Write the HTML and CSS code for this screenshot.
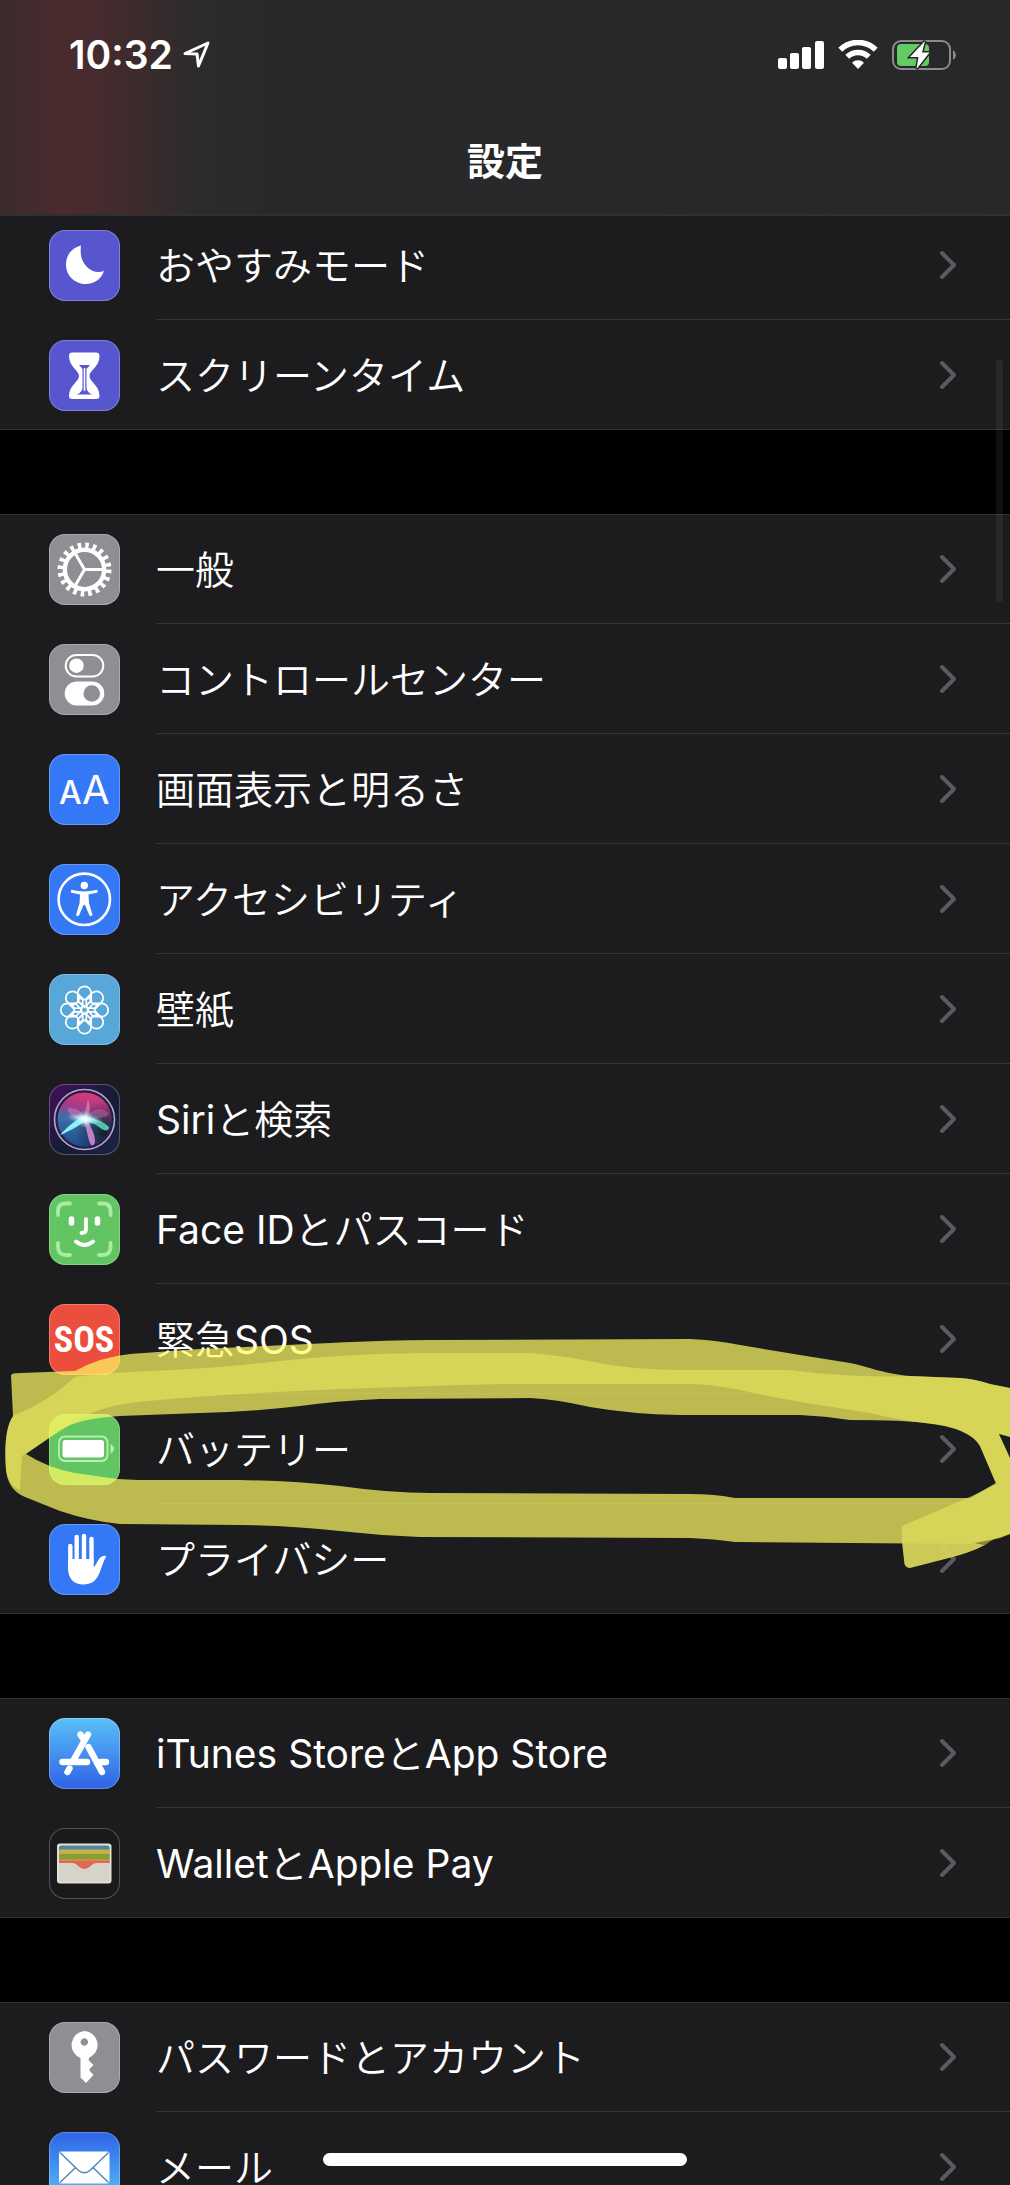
FILE: index.html
```html
<!DOCTYPE html>
<html lang="ja">
<head>
    <meta charset="UTF-8">
    <meta name="viewport" content="width=device-width, initial-scale=1.0">
    <title>設定</title>
    <link rel="stylesheet" href="styles.css">
</head>
<body>
<div class="screen">
    <header class="header">
        <div class="status-bar">
            <div class="status-left">
                <span class="time">10:32</span>
                <svg class="location" width="28" height="28" viewBox="0 0 28 28">
                    <path d="M2 12.500 L25 2 L15.500 25 L14 13 Z" fill="none" stroke="#fff" stroke-width="3" stroke-linejoin="round"/>
                </svg>
            </div>
            <div class="status-right">
                <svg width="46" height="30" viewBox="0 0 46 30" fill="#fff">
                    <rect x="0" y="18" width="9" height="11" rx="2"/>
                    <rect x="12" y="13" width="9" height="16" rx="2"/>
                    <rect x="24" y="7" width="9" height="22" rx="2"/>
                    <rect x="37" y="1" width="9" height="28" rx="2"/>
                </svg>
                <svg width="40" height="30" viewBox="0 0 40 30" fill="none" stroke="#fff" stroke-width="5.500">
                    <path d="M2.300 9.800 A25 25 0 0 1 37.700 9.800"/>
                    <path d="M9.200 16.800 A15.500 15.500 0 0 1 30.800 16.800"/>
                    <path d="M20 29 L14 22.800 A8.500 8.500 0 0 1 26 22.800 Z" fill="#fff" stroke="none"/>
                </svg>
                <svg width="65" height="30" viewBox="0 0 65 30">
                    <rect x="1" y="1" width="57" height="28" rx="8" fill="none" stroke="#8b8b8d" stroke-width="2"/>
                    <path d="M61 10 Q64 12 64 15 Q64 18 61 20 Z" fill="#8b8b8d"/>
                    <rect x="5" y="4" width="32" height="22" rx="4" fill="#63cb63"/>
                    <path d="M33 1 L18 17 H26.500 L24.500 29 L37.500 12.500 H30 Z" fill="#fff" stroke="#28282a" stroke-width="3" paint-order="stroke"/>
                </svg>
            </div>
        </div>
        <h1>設定</h1>
    </header>

    <main class="list">
        <section class="group">
            <a class="row" href="#dnd">
                <svg class="icon purple" viewBox="0 0 71 71">
                    <path d="M32 15.500 C22 18 17 26 17 34.500 C17 46 26 54 37 54 C45 54 52.500 49 55 41 C49 43 43 42 38 37 C32 31 31 24 32 15.500 Z" fill="#fff"/>
                </svg>
                <span class="label">おやすみモード</span>
                <svg class="chevron" viewBox="0 0 18 30"><path d="M3 3 L15 15 L3 27"/></svg>
            </a>
            <a class="row" href="#screentime">
                <svg class="icon purple" viewBox="0 0 71 71">
                    <path d="M23 12.500 H47 Q50.500 12.500 50.500 16 C50.500 27 40.500 30 40.500 36 C40.500 42 50.500 45 50.500 56 Q50.500 59 47 59 H23 Q20 59 20 56 C20 45 30 42 30 36 C30 30 20 27 20 16 Q20 12.500 23 12.500 Z" fill="#fff"/>
                    <path d="M30 25 H41 L37.500 29 V48 Q38 52 43 54.500 H28 Q33 52 33.500 48 V29 Z" fill="#5856ce"/>
                    <path d="M35.500 28 V51" stroke="#fff" stroke-width="1.600"/>
                </svg>
                <span class="label">スクリーンタイム</span>
                <svg class="chevron" viewBox="0 0 18 30"><path d="M3 3 L15 15 L3 27"/></svg>
            </a>
        </section>

        <section class="group">
            <a class="row" href="#general">
                <svg class="icon gray" viewBox="0 0 71 71" fill="none" stroke="#fff">
                    <circle cx="35.500" cy="35.500" r="24" stroke-width="6" stroke-dasharray="3.600 3.940"/>
                    <circle cx="35.500" cy="35.500" r="19.700" stroke-width="4.400"/>
                    <path d="M35.500 35.500 H54 M35.500 35.500 L26 19 M35.500 35.500 L26 52" stroke-width="3"/>
                </svg>
                <span class="label">一般</span>
                <svg class="chevron" viewBox="0 0 18 30"><path d="M3 3 L15 15 L3 27"/></svg>
            </a>
            <a class="row" href="#control">
                <svg class="icon gray" viewBox="0 0 71 71">
                    <rect x="16.700" y="11" width="37.600" height="21.500" rx="10.700" fill="none" stroke="#fff" stroke-width="2"/>
                    <circle cx="27.500" cy="21.700" r="7.200" fill="#fff"/>
                    <rect x="15.700" y="37.500" width="39.600" height="24" rx="12" fill="#fff"/>
                    <circle cx="42.800" cy="49.500" r="8.300" fill="#8e8e93"/>
                </svg>
                <span class="label">コントロールセンター</span>
                <svg class="chevron" viewBox="0 0 18 30"><path d="M3 3 L15 15 L3 27"/></svg>
            </a>
            <a class="row" href="#display">
                <svg class="icon blue" viewBox="0 0 71 71" fill="#fff">
                    <text class="aa-small" x="10" y="50">A</text>
                    <text class="aa-big" x="33" y="50">A</text>
                </svg>
                <span class="label">画面表示と明るさ</span>
                <svg class="chevron" viewBox="0 0 18 30"><path d="M3 3 L15 15 L3 27"/></svg>
            </a>
            <a class="row" href="#accessibility">
                <svg class="icon blue" viewBox="0 0 71 71" fill="#fff">
                    <circle cx="35.300" cy="35.300" r="25.700" fill="none" stroke="#fff" stroke-width="2.600"/>
                    <circle cx="35.300" cy="21.500" r="3.700"/>
                    <path d="M22.500 25.800 Q35.300 29 48 25.800 Q49.500 28 48 28.700 L39.500 30.500 L40 39 L43.500 51 Q42 53 40.500 51.500 L36 41 H34.600 L30 51.500 Q28.500 53 27 51 L30.600 39 L31 30.500 L22.500 28.700 Q21 28 22.500 25.800 Z"/>
                </svg>
                <span class="label">アクセシビリティ</span>
                <svg class="chevron" viewBox="0 0 18 30"><path d="M3 3 L15 15 L3 27"/></svg>
            </a>
            <a class="row" href="#wallpaper">
                <svg class="icon sky" viewBox="0 0 71 71">
                    <defs>
                        <path id="petal" d="M-6.700 -17 A6.700 6.700 0 0 1 6.700 -17 V-9 L0 -3 L-6.700 -9 Z M-6.700 -17 A6.700 6.700 0 0 0 6.700 -17"/>
                    </defs>
                    <g transform="translate(35.500 36)" fill="none" stroke="#fff" stroke-width="1.700">
                        <use href="#petal"/>
                        <use href="#petal" transform="rotate(45)"/>
                        <use href="#petal" transform="rotate(90)"/>
                        <use href="#petal" transform="rotate(135)"/>
                        <use href="#petal" transform="rotate(180)"/>
                        <use href="#petal" transform="rotate(225)"/>
                        <use href="#petal" transform="rotate(270)"/>
                        <use href="#petal" transform="rotate(315)"/>
                        <circle r="3.800"/>
                    </g>
                </svg>
                <span class="label">壁紙</span>
                <svg class="chevron" viewBox="0 0 18 30"><path d="M3 3 L15 15 L3 27"/></svg>
            </a>
            <a class="row" href="#siri">
                <svg class="icon siri" viewBox="0 0 71 71">
                    <defs>
                        <linearGradient id="orb" x1="0.600" y1="0" x2="0.350" y2="1">
                            <stop offset="0" stop-color="#d93a78"/>
                            <stop offset="0.300" stop-color="#a83a86"/>
                            <stop offset="0.550" stop-color="#3b6fa8"/>
                            <stop offset="1" stop-color="#1a4f94"/>
                        </linearGradient>
                        <radialGradient id="shade" cx="0.900" cy="0.750" r="0.600">
                            <stop offset="0" stop-color="#141c2c"/>
                            <stop offset="1" stop-color="#141c2c" stop-opacity="0"/>
                        </radialGradient>
                        <radialGradient id="glow">
                            <stop offset="0" stop-color="#fff"/>
                            <stop offset="0.300" stop-color="#e4ffff" stop-opacity="0.800"/>
                            <stop offset="1" stop-color="#8ce8f0" stop-opacity="0"/>
                        </radialGradient>
                    </defs>
                    <circle cx="35.500" cy="35.500" r="30" fill="#2a1a48" stroke="#b0aac8" stroke-width="1.600"/>
                    <circle cx="35.500" cy="35.500" r="27" fill="url(#orb)"/>
                    <circle cx="35.500" cy="35.500" r="27" fill="url(#shade)"/>
                    <path d="M36 35 C33 27 28 24 19 24 C18 30 26 36 36 35 Z" fill="#c878c0" opacity="0.600"/>
                    <path d="M36 35 C35 28 38 21 39 15 C42 22 42 30 36 35 Z" fill="#e88cb8" opacity="0.600"/>
                    <path d="M36 35 C42 24 54 22 60 30 C57 34 46 35 36 35 Z" fill="#b070a8" opacity="0.500"/>
                    <path d="M37 32 C44 34 56 38 60 43 C60 48 55 47 50 43 C45 39 39 38 36 37 Z" fill="#5fd8b8" opacity="0.850"/>
                    <path d="M34 32 C27 36 18 43 11 51 C20 48 30 41 37 37 Z" fill="#8cf0f8"/>
                    <path d="M34 36 C38 43 38 54 42 61 Q46 62 46 57 C46 49 41 42 38 35 Z" fill="#d288d0" opacity="0.900"/>
                    <ellipse cx="36" cy="35" rx="19" ry="5" fill="url(#glow)" transform="rotate(8 36 35)"/>
                    <circle cx="36" cy="35" r="9" fill="url(#glow)"/>
                </svg>
                <span class="label"><span class="latin">Siri</span>と検索</span>
                <svg class="chevron" viewBox="0 0 18 30"><path d="M3 3 L15 15 L3 27"/></svg>
            </a>
            <a class="row" href="#faceid">
                <svg class="icon green" viewBox="0 0 71 71" fill="none" stroke-linecap="round">
                    <path d="M9 21 V17 Q9 9.500 17 9.500 H21 M50 9.500 H54 Q61.500 9.500 61.500 17 V21 M61.500 49 V53 Q61.500 61 54 61 H50 M21 61 H17 Q9 61 9 53 V49" stroke="#a8eca6" stroke-width="3.800"/>
                    <path d="M22.500 25 V29 M48.500 25 V29" stroke="#fff" stroke-width="5.600"/>
                    <path d="M37 25 V35 Q37 39 32.500 39" stroke="#fff" stroke-width="3.800"/>
                    <path d="M27 47.500 Q35.500 54.500 44 47.500" stroke="#fff" stroke-width="4"/>
                </svg>
                <span class="label"><span class="latin">Face ID</span>とパスコード</span>
                <svg class="chevron" viewBox="0 0 18 30"><path d="M3 3 L15 15 L3 27"/></svg>
            </a>
            <a class="row" href="#sos">
                <svg class="icon red" viewBox="0 0 71 71" fill="#fff">
                    <text class="sos" x="35" y="48" text-anchor="middle">SOS</text>
                </svg>
                <span class="label">緊急<span class="latin">SOS</span></span>
                <svg class="chevron" viewBox="0 0 18 30"><path d="M3 3 L15 15 L3 27"/></svg>
            </a>
            <a class="row" href="#battery">
                <svg class="icon green" viewBox="0 0 71 71">
                    <rect x="10" y="22.500" width="48.500" height="24.500" rx="6" fill="none" stroke="#b6efb4" stroke-width="1.800"/>
                    <rect x="13.500" y="26" width="41.500" height="17.500" rx="3" fill="#fff"/>
                    <path d="M61.500 30 Q65 32 65 34.700 Q65 37.500 61.500 39.500 Z" fill="#b6efb4"/>
                </svg>
                <span class="label">バッテリー</span>
                <svg class="chevron" viewBox="0 0 18 30"><path d="M3 3 L15 15 L3 27"/></svg>
            </a>
            <a class="row" href="#privacy">
                <svg class="icon blue" viewBox="0 0 71 71">
                    <path d="M21.300 22 V42 M27.700 13 V36 M35 12 V36 M42.500 15 V38" stroke="#fff" stroke-width="4.400" stroke-linecap="round"/>
                    <path d="M19 35 H44.700 V43 C47 42 49 34 53 32.500 Q56 31 57.500 32.300 C54 37 53 44 50 50 C47 57 42 60.500 34.500 60.500 C24 60.500 19 54 19 44 Z" fill="#fff"/>
                </svg>
                <span class="label">プライバシー</span>
                <svg class="chevron" viewBox="0 0 18 30"><path d="M3 3 L15 15 L3 27"/></svg>
            </a>

            <!-- marker stroke around バッテリー -->
            <svg class="marker" viewBox="0 1330 1010 250" preserveAspectRatio="none">
                <path fill="#fffb64" fill-opacity="0.710" d="M11 1375 Q12 1373 20 1373 L75 1371 Q100 1357 130 1354 L200 1349 L330 1343 Q390 1340 430 1340 L690 1339 Q715 1340 740 1345 L800 1355 L850 1363 C870 1367 880 1373 910 1376 L960 1378 Q975 1379 990 1384 L1010 1388 V1534 L1000 1538 L970 1544 L735 1542 Q715 1539 690 1538 L420 1537 Q385 1536 350 1532 Q290 1525 240 1525 L120 1524 Q90 1521 60 1511 L25 1497 Q8 1490 6 1470 Q3 1430 13 1416 Z
                M26 1454 Q48 1468 75 1473 L110 1478 Q125 1480 150 1480 L240 1480 Q295 1481 340 1486 Q390 1493 430 1493 L690 1494 Q715 1494 735 1498 L970 1498 L996 1483 L980 1446 Q970 1428 925 1423 Q905 1420 850 1420 Q825 1416 800 1415 L680 1415 Q630 1414 590 1407 Q555 1399 530 1398 L380 1399 Q335 1401 300 1406 Q250 1412 200 1413 L120 1416 Q80 1418 60 1430 Z"
                fill-rule="evenodd"/>
                <path fill="#f0f060" fill-opacity="0.500" d="M14 1415 Q45 1404 75 1377 Q100 1373 150 1371 Q210 1369 270 1362 Q350 1353 430 1353 L530 1353 Q560 1355 600 1363 Q635 1370 690 1370 L790 1370 Q850 1378 910 1376 L960 1378 Q975 1379 990 1384 L1010 1388 V1437 L999 1434 L1010 1456 V1534 Q995 1537 985 1545 L970 1542 H902 V1526 Q930 1514 960 1501 Q975 1495 996 1484 L980 1446 Q968 1426 925 1423 Q905 1421 870 1413 L800 1402 Q770 1397 740 1390 Q710 1384 690 1384 L505 1384 Q380 1387 300 1391 Q210 1395 160 1400 Q110 1403 85 1416 Q60 1431 42 1443 L22 1456 L20 1490 Q8 1485 6 1470 Q3 1430 14 1415 Z"/>
                <path fill="#1c1c1e" d="M999 1434 L1010 1437 V1458 Z"/>
                <path fill="#d6d45a" fill-opacity="0.950" d="M902 1542 H970 L985 1545 Q970 1553 945 1559 L910 1568 Q904 1568 904 1560 Z"/>
            </svg>
        </section>

        <section class="group">
            <a class="row" href="#store">
                <svg class="icon store" viewBox="0 0 71 71" fill="none" stroke="#fff" stroke-width="6.400" stroke-linecap="round">
                    <path d="M39 16.500 L24 43 M20.500 50.500 L18.500 54"/>
                    <path d="M31.500 16.500 L34 20.500 M39.500 29 L53 54"/>
                    <path d="M13.500 44 H38 M52 44 H57"/>
                </svg>
                <span class="label"><span class="latin">iTunes Store</span>と<span class="latin">App Store</span></span>
                <svg class="chevron" viewBox="0 0 18 30"><path d="M3 3 L15 15 L3 27"/></svg>
            </a>
            <a class="row" href="#wallet">
                <svg class="icon wallet" viewBox="0 0 71 71">
                    <rect x="8" y="15.500" width="54.500" height="40" rx="3" fill="#e2e0d8"/>
                    <rect x="10" y="17.500" width="50.500" height="14" rx="2" fill="#4f87a3"/>
                    <rect x="10" y="21.500" width="50.500" height="10" rx="2" fill="#c9b145"/>
                    <rect x="10" y="26" width="50.500" height="8" rx="1" fill="#7fa238"/>
                    <rect x="10" y="31" width="50.500" height="5" fill="#d98a3c"/>
                    <path d="M10 33 H60.500 V35 H48 C42 35 42 41 35.300 41 C29 41 29 35 23 35 H10 Z" fill="#e0685a"/>
                    <path d="M10 35 H23 C29 35 29 41 35.300 41 C42 41 42 35 48 35 H60.500 V53.500 H10 Z" fill="#d6d3c9"/>
                </svg>
                <span class="label"><span class="latin">Wallet</span>と<span class="latin">Apple Pay</span></span>
                <svg class="chevron" viewBox="0 0 18 30"><path d="M3 3 L15 15 L3 27"/></svg>
            </a>
        </section>

        <section class="group">
            <a class="row" href="#passwords">
                <svg class="icon gray" viewBox="0 0 71 71">
                    <path fill="#fff" fill-rule="evenodd" d="M35.300 9 A14 14 0 0 1 39.800 36 V38.500 L44.500 43 L40.500 47 V48.500 L44.500 53 L37 61 L31.500 55.500 V36 A14 14 0 0 1 35.300 9 Z M35.300 16.300 A3.700 3.700 0 1 0 35.400 16.300 Z"/>
                </svg>
                <span class="label">パスワードとアカウント</span>
                <svg class="chevron" viewBox="0 0 18 30"><path d="M3 3 L15 15 L3 27"/></svg>
            </a>
            <a class="row" href="#mail">
                <svg class="icon mail" viewBox="0 0 71 71">
                    <rect x="10" y="19.500" width="50.500" height="32" rx="2" fill="#fff"/>
                    <path d="M11 20.500 L29 38 Q35.300 43.500 41.500 38 L59.500 20.500 M11 50.500 L26 36 M59.500 50.500 L44.500 36" fill="none" stroke="#4a86b0" stroke-width="1.400"/>
                </svg>
                <span class="label">メール</span>
                <svg class="chevron" viewBox="0 0 18 30"><path d="M3 3 L15 15 L3 27"/></svg>
            </a>
        </section>
    </main>

    <div class="scrollbar"></div>
    <div class="home-indicator"></div>
</div>
</body>
</html>
```

FILE: styles.css
```css
* {
    box-sizing: border-box;
}

body {
    margin: 0;
    background: #000;
    color: #fff;
    font-family: Inter, "Noto Sans CJK JP", sans-serif;
}

.screen {
    position: relative;
    height: 100vh;
    overflow: hidden;
}

/* header lies over the scrolled list */
.header {
    position: absolute;
    top: 0;
    left: 0;
    right: 0;
    z-index: 2;
    height: 216px;
    border-bottom: 2px solid #303032;
    background: linear-gradient(90deg, #3a2b2c 0, #4a2b2e 60px, #482b2e 90px, #3c2b2d 140px, #2e2b2b 190px, #29292b 260px, #28282a 100%);
}

.status-bar {
    display: flex;
    justify-content: space-between;
    align-items: center;
    padding: 30px 53px 0 69px;
}

.status-left {
    display: flex;
    align-items: center;
    gap: 10px;
}

.status-right {
    display: flex;
    align-items: center;
    gap: 14px;
}

.time {
    font-size: 39px;
    line-height: 50px;
    font-weight: 600;
}

h1 {
    margin: 53px 0 0;
    font-size: 38px;
    line-height: 56px;
    font-weight: 700;
    text-align: center;
}

.list {
    padding-top: 210px;
}

.group {
    position: relative;
    margin-bottom: 84px;
    background: #1c1c1e;
    box-shadow: inset 0 1px #303033, inset 0 -1px #303033;
}

.row {
    display: flex;
    align-items: center;
    height: 110px;
    padding-left: 49px;
    color: #fff;
    text-decoration: none;
}

.label {
    flex: 1;
    margin-left: 36px;
    padding-top: 2px;
    font-size: 39px;
    line-height: 60px;
    font-weight: 350;
    white-space: nowrap;
}

.latin {
    font-weight: 400;
}

.row:not(:last-of-type) {
    background: linear-gradient(#353538, #353538) 156px 100% / 100% 1px no-repeat;
}

.icon {
    flex: none;
    width: 71px;
    height: 71px;
    border-radius: 16px;
    box-shadow: inset 0 0 0 1px rgba(255, 255, 255, 0.25);
}

.purple { background-color: #5856ce; }
.gray { background-color: #8e8e93; }
.blue { background-color: #3478f6; }
.sky { background-color: #57a7d8; }
.green { background-color: #62c462; }
.red { background-color: #eb4e3d; }
.siri { background: linear-gradient(135deg, #43105e, #151b35 55%, #1d2445); }
.store { background: linear-gradient(#5ac0f8, #2f62e6); }
.wallet { background-color: #1a1a1c; }
.mail { background: linear-gradient(#2f63e8, #58c4fa); }

.aa-small {
    font-size: 32px;
    font-weight: 500;
}

.aa-big {
    font-size: 40px;
    font-weight: 400;
}

.sos {
    font-family: "Liberation Sans Narrow", "Roboto Condensed", "Liberation Sans", sans-serif;
    font-size: 36px;
    font-weight: 700;
}

.chevron {
    flex: none;
    width: 18px;
    height: 30px;
    margin-right: 53px;
    fill: none;
    stroke: #5b5b5f;
    stroke-width: 4px;
    stroke-linecap: round;
    stroke-linejoin: round;
}

.marker {
    position: absolute;
    left: 0;
    top: 816px;
    width: 100%;
    height: 250px;
    pointer-events: none;
}

.scrollbar {
    position: absolute;
    top: 360px;
    right: 7px;
    width: 7px;
    height: 242px;
    border-radius: 4px;
    background: rgba(255, 255, 255, 0.06);
}

.home-indicator {
    position: absolute;
    bottom: 19px;
    left: 32%;
    right: 32%;
    height: 13px;
    border-radius: 7px;
    background: #fff;
}
```
